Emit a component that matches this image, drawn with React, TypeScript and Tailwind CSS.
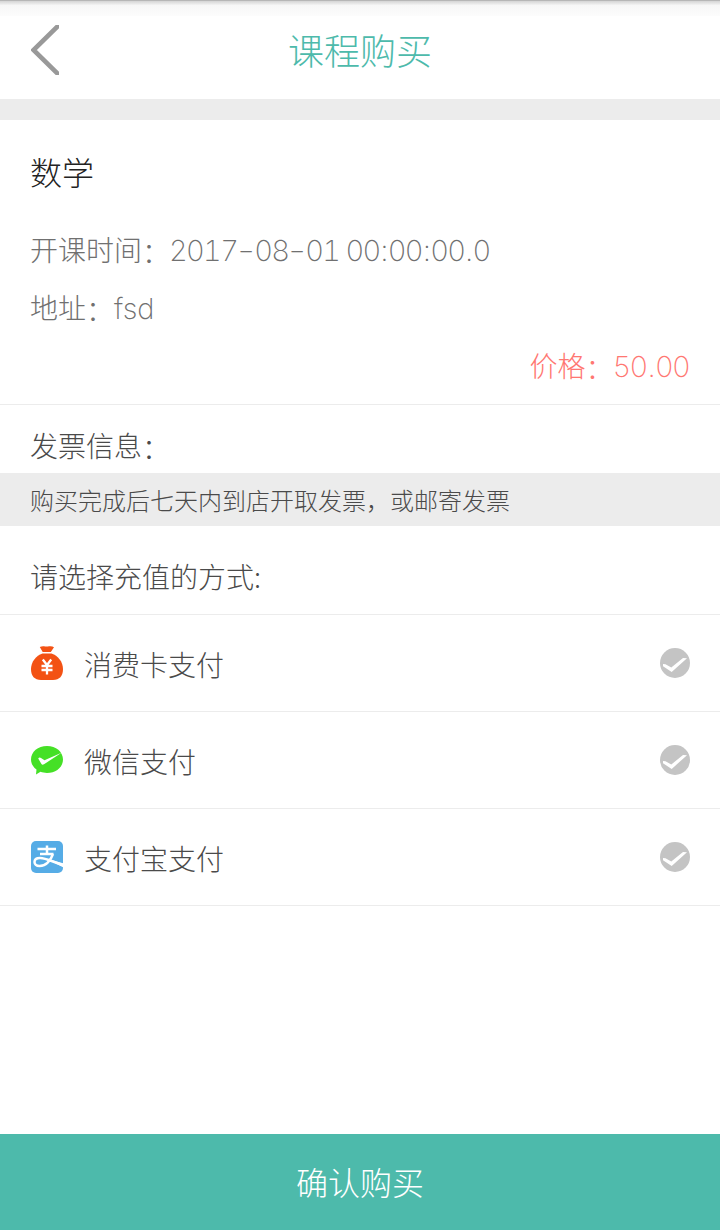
import type { ReactNode } from 'react';

function Latin({ children }: { children: ReactNode }) {
  return (
    <span className="font-['Inter','Noto_Sans_CJK_SC',sans-serif] text-[29px] leading-none font-extralight">
      {children}
    </span>
  );
}

function Digits({ children }: { children: ReactNode }) {
  return <span className="-ml-px tracking-[-1.7px] tabular-nums">{children}</span>;
}

function Mark({ children }: { children: ReactNode }) {
  return <span className="mx-[1.1px]">{children}</span>;
}

function Colon() {
  return <span className="relative top-[2px]">：</span>;
}

function Dash() {
  return <span className="mr-[3px] -ml-px inline-block w-[15px] scale-x-[1.35] text-center tracking-normal">-</span>;
}

function CheckMark() {
  return (
    <svg className="h-[30px] w-[30px]" viewBox="0 0 30 30">
      <circle cx="15" cy="15" r="15" fill="#c4c4c4" />
      <path d="M3 16 5.500 16.300 11.300 19.500 23 10 27 10.200 11.700 23.900 3 18.300Z" fill="#fff" />
    </svg>
  );
}

function MoneyBag() {
  return (
    <svg className="h-[34px] w-8" viewBox="0 0 32 34">
      <path d="M8.800 1Q11 0 13 0.300Q15.500 0.700 18 0.300Q21 -0.200 23 1.200L19.800 6H11.700Z" fill="#f35214" />
      <path d="M11.500 7.500H20.500C27 9.500 32 16 32 23C32 30 28.500 34 22 34H10C3.500 34 0 30 0 23C0 16 5 9.500 11.500 7.500Z" fill="#f35214" />
      <path d="M11.800 13.500 16 19 20.200 13.500M16 18.500V28.500M10.500 20H21.500M10.500 24H21.500" stroke="#fff" strokeWidth="2.300" fill="none" />
    </svg>
  );
}

function WeChatPay() {
  return (
    <svg className="h-[29px] w-8" viewBox="0 0 32 29">
      <path d="M16 0C25 0 32 5.800 32 13.500S25 27 16 27C13.500 27 11.500 26.500 9.500 25.800L5 28.500 5.500 23.500C2 21 0 17.500 0 13.500C0 5.800 7 0 16 0Z" fill="#45e026" />
      <path d="M7.200 12.400Q8.500 11 10 12L13.500 14.300 30.500 6.700 13 18.300Q11.200 19.400 10.300 17.800Z" fill="#fff" />
    </svg>
  );
}

function Alipay() {
  return (
    <svg className="h-8 w-8" viewBox="0 0 32 32">
      <rect width="32" height="32" rx="5" fill="#56ace6" />
      <path d="M6.500 8H25M9 13H22.500M16 4.500V13M22 13C20 18.500 15.500 25 8.500 25C2 25 1.500 17 9 17C15 17 22 21 32 24" fill="none" stroke="#fff" strokeWidth="2.500" />
      <path d="M15 17.500 32 22.300V26.300Z" fill="#fff" />
    </svg>
  );
}

const methods = [
  { name: '消费卡支付', icon: <MoneyBag /> },
  { name: '微信支付', icon: <WeChatPay /> },
  { name: '支付宝支付', icon: <Alipay /> },
];

export default function App() {
  return (
    <div className="flex h-[1230px] w-[720px] flex-col overflow-hidden bg-white font-['Noto_Sans_CJK_SC',sans-serif] text-[28px] font-light text-[#4a4a4a]">
      <div className="h-px shrink-0 bg-[#b6b6b6]" />
      <div className="h-[15px] shrink-0 bg-linear-to-b from-[#d4d4d4] via-[#f7f7f7] via-30% to-[#fcfcfc]" />
      <header className="-mt-4 grid h-[99px] shrink-0 grid-cols-[1fr_auto_1fr] items-center px-[30px]">
        <button aria-label="返回" className="w-8 pl-px">
          <svg className="h-[50px] w-7" viewBox="0 0 28 50">
            <path d="M29 -1 2.500 25 29 51" fill="none" stroke="#999" strokeWidth="4.600" />
          </svg>
        </button>
        <h1 className="pb-px text-4xl leading-[52px] text-[#4dbaab]">课程购买</h1>
      </header>
      <div className="h-[21px] shrink-0 bg-[#ececec]" />
      <section className="h-[285px] shrink-0 border-b border-[#ececec] px-[30px] pt-[25px] text-[#707070]">
        <h2 className="text-[32px] leading-[52px] text-[#222]">数学</h2>
        <p className="mt-[23px] h-[58px] leading-[58px]">
          开课时间<Colon />
          <Latin>
            <Digits>
              2017<Dash />08<Dash />01 00<Mark>:</Mark>00<Mark>:</Mark>00<Mark>.</Mark>0
            </Digits>
          </Latin>
        </p>
        <p className="h-[58px] leading-[58px]">地址<Colon /><Latin>fsd</Latin></p>
        <p className="h-[58px] pr-px text-right leading-[58px] text-[#ff7772]">
          价格<Colon /><Latin><Digits>50<Mark>.</Mark>00</Digits></Latin>
        </p>
      </section>
      <section className="shrink-0">
        <h3 className="h-[68px] px-[30px] pt-[11px] leading-[58px]">发票信息<Colon /></h3>
        <p className="h-[53px] bg-[#ececec] px-[30px] text-2xl leading-[53px]">购买完成后七天内到店开取发票，或邮寄发票</p>
      </section>
      <h3 className="h-[89px] shrink-0 border-b border-[#ececec] px-[30px] pt-[21px] leading-[58px]">请选择充值的方式:</h3>
      <ul>
        {methods.map((m) => (
          <li key={m.name} className="flex h-[97px] items-center border-b border-[#ececec] pr-[30px] pl-[31px]">
            {m.icon}
            <span className="ml-[21px] flex-1 pt-px">{m.name}</span>
            <CheckMark />
          </li>
        ))}
      </ul>
      <button className="mt-auto h-24 shrink-0 bg-[#4dbaab] pb-0.5 text-[32px] font-light text-white">确认购买</button>
    </div>
  );
}
